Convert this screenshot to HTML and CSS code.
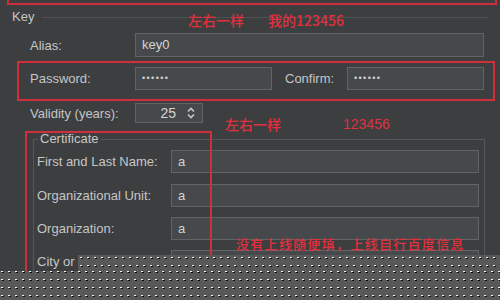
FILE: index.html
```html
<!DOCTYPE html>
<html lang="zh-CN">

<head>
  <meta charset="UTF-8">
  <meta name="viewport" content="width=device-width, initial-scale=1.0">
  <title>Key</title>

  <link rel="stylesheet" href="styles.css">
</head>

<body>
  <main class="dialog">
    <div class="group-title">Key</div>

    <section class="key-body">
      <div class="row">
        <label class="label">Alias:</label>
        <div class="field wide">key0</div>
      </div>

      <div class="row pw-row">
        <label class="label">Password:</label>
        <div class="field half dots">••••••</div>
        <label class="label confirm">Confirm:</label>
        <div class="field half dots">••••••</div>
      </div>

      <div class="row validity-row">
        <label class="label">Validity (years):</label>
        <div class="field spinner">
          <span class="num">25</span>
          <svg class="stepper" width="12" height="16" viewBox="0 0 12 16">
            <path d="M3 6.5 L6 3.5 L9 6.5" fill="none" stroke="#c8c8c8" stroke-width="1.6" />
            <path d="M3 9.5 L6 12.5 L9 9.5" fill="none" stroke="#c8c8c8" stroke-width="1.6" />
          </svg>
        </div>
      </div>
    </section>

    <fieldset class="cert">
      <legend>Certificate</legend>
      <div class="row">
        <label class="label cert-label">First and Last Name:</label>
        <div class="field cert-field">a</div>
      </div>
      <div class="row">
        <label class="label cert-label">Organizational Unit:</label>
        <div class="field cert-field">a</div>
      </div>
      <div class="row">
        <label class="label cert-label">Organization:</label>
        <div class="field cert-field">a</div>
      </div>
      <div class="row">
        <label class="label cert-label">City or Locality:</label>
        <div class="field cert-field">a</div>
      </div>
    </fieldset>

    <!-- red marks drawn over the screenshot -->
    <div class="mark box-top"></div>
    <div class="mark box-pw"></div>
    <div class="mark box-cert"></div>

    <span class="note n1">左右一样</span>
    <span class="note n2">我的123456</span>
    <span class="note n3">左右一样</span>
    <span class="note n4">123456</span>
    <span class="note n5">没有上线随便填，上线自行百度信息</span>

    <!-- dotted cover at the bottom -->
    <div class="noise noise-a"></div>
    <div class="noise noise-b"></div>
  </main>
</body>

</html>
```

FILE: styles.css
```css
body {
  margin: 0;
  background: #3c3e40;
}

.dialog {
  position: relative;
  width: 500px;
  height: 300px;
  overflow: hidden;
  background: #3c3e40;
  color: #c6c6c6;
  font-family: "Liberation Sans", Arial, sans-serif;
  font-size: 13px;
}

.group-title {
  height: 16px;
  line-height: 16px;
  padding: 9px 0 0 12px;
  display: flex;
  align-items: center;
  gap: 8px;
}

.group-title::after {
  content: "";
  flex: 1;
  height: 1px;
  margin-right: 12px;
  background: #4d5153;
}

.key-body {
  padding: 0 16px 0 30px;
}

.row {
  display: flex;
  align-items: center;
  height: 24px;
  margin-top: 8px;
}

.label {
  width: 105px;
  flex: none;
}

.field {
  box-sizing: border-box;
  height: 100%;
  background: #46494b;
  border: 1px solid #616466;
  padding: 0 6px;
  line-height: 22px;
  color: #d4d4d4;
}

.wide {
  flex: 1;
}

.pw-row {
  height: 23px;
  margin-top: 10px;
}

.half {
  width: 137px;
}

.dots {
  font-size: 9px;
  letter-spacing: 1.4px;
  line-height: 21px;
}

.confirm {
  width: 62px;
  margin-left: 13px;
}

.validity-row {
  height: 20px;
  margin-top: 13px;
}

.spinner {
  width: 68px;
  display: flex;
  align-items: center;
  justify-content: flex-end;
  gap: 9px;
  padding: 0 5px 0 0;
  line-height: 18px;
}

.num {
  font-size: 14px;
}

.cert {
  margin: 9px 0 0 33px;
  width: 452px;
  box-sizing: border-box;
  padding: 0 5px 40px 3px;
  border: 1px solid #54585a;
}

.cert legend {
  padding: 0 2px;
  margin-left: 1px;
  line-height: 14px;
}

.cert .row {
  height: 23px;
  margin-top: 10px;
}

.cert .row:first-of-type {
  margin-top: 4px;
}

.cert .row:nth-of-type(2) {
  margin-top: 11px;
}

.cert-label {
  width: 134px;
}

.cert-field {
  flex: 1;
}

.mark {
  position: absolute;
  border: 2px solid #cf2f3b;
}

.box-top {
  left: 7px;
  top: -12px;
  width: 486px;
  height: 13px;
}

.box-pw {
  left: 17px;
  top: 61px;
  width: 474px;
  height: 36px;
}

.box-cert {
  left: 25px;
  top: 131px;
  width: 183px;
  height: 160px;
}

.note {
  position: absolute;
  color: #e3303e;
  font-family: "Noto Sans CJK SC", "Liberation Sans", sans-serif;
  font-size: 14px;
  font-weight: 500;
  line-height: 16px;
  white-space: nowrap;
}

.n1 {
  left: 188px;
  top: 12px;
}

.n2 {
  left: 268px;
  top: 12px;
}

.n3 {
  left: 225px;
  top: 116px;
}

.n4 {
  left: 343px;
  top: 116px;
  font-family: "Liberation Sans", sans-serif;
}

.n5 {
  left: 236px;
  top: 236px;
  font-size: 13px;
  letter-spacing: 1.3px;
}

.noise {
  position: absolute;
  z-index: 5;
  background-color: #585858;
  background-image:
    conic-gradient(at 2px 1px, transparent 75%, #f4f4f4 0),
    conic-gradient(at 2px 1px, transparent 75%, #0c0c0c 0);
  background-size: 7px 8px;
  background-position: 2px 2px, 3px 3px;
}

.noise-a {
  left: 78px;
  top: 255px;
  width: 422px;
  height: 16px;
}

.noise-b {
  left: 0;
  top: 271px;
  width: 500px;
  height: 29px;
  background-position: 78px 0, 79px 1px;
}
```
